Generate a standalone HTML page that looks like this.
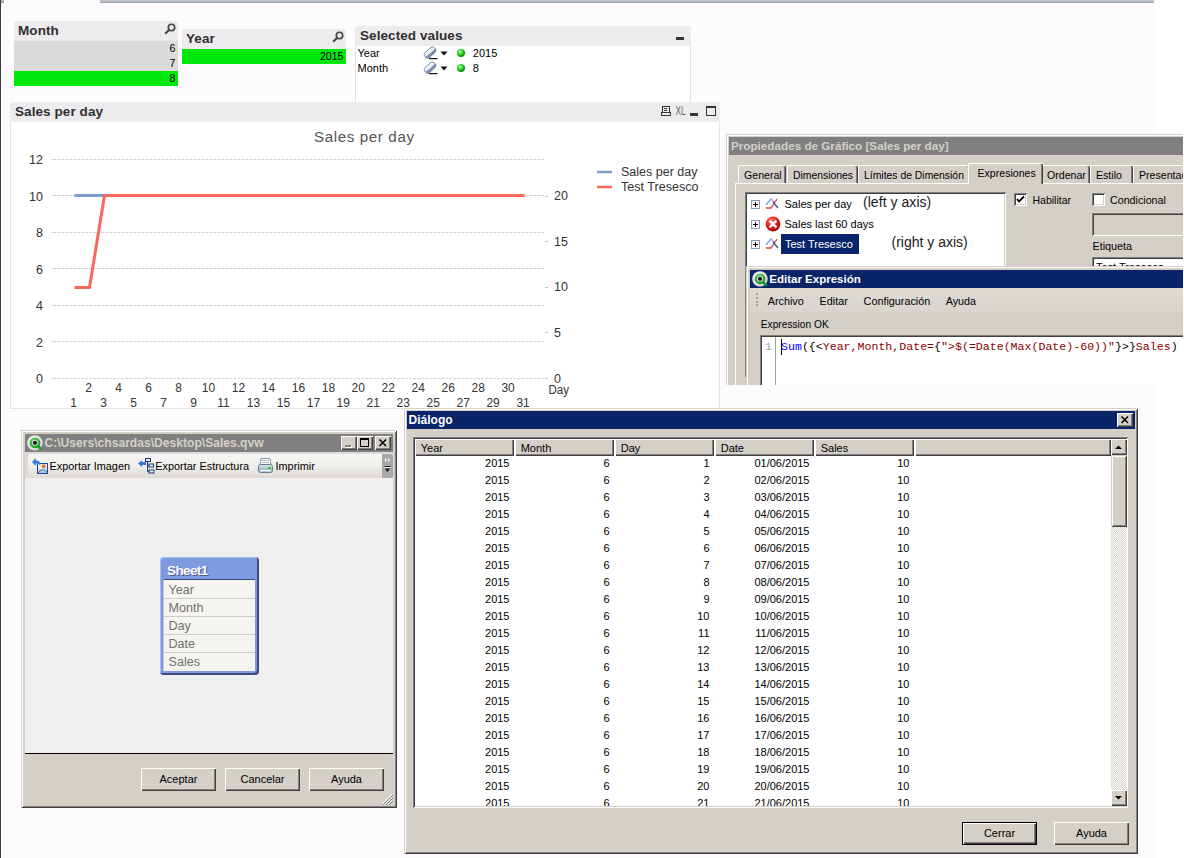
<!DOCTYPE html><html><head><meta charset="utf-8"><style>
html,body{margin:0;padding:0;}
body{width:1184px;height:858px;position:relative;overflow:hidden;background:#ffffff;font-family:"Liberation Sans",sans-serif;}
div{position:absolute;box-sizing:border-box;}
.t{white-space:pre;line-height:1;}
svg{position:absolute;}
</style></head><body><div style="left:0px;top:0px;width:1154px;height:858px;background:#fefbfe;"></div>
<div style="left:0px;top:0px;width:1px;height:858px;background:#3c3c3c;"></div>
<div style="left:1px;top:0px;width:3px;height:3px;background:linear-gradient(#c0c4cc,#8c9098);"></div>
<div style="left:100px;top:0px;width:1054px;height:3px;background:linear-gradient(#c4c8d0,#b4b8c0 60%,#8a8e96);"></div>
<div style="left:13.5px;top:21px;width:164.5px;height:20px;background:#eeebee;border-radius:2px 2px 0 0;"></div>
<div class="t" style="left:18px;top:24.00px;font-size:13.5px;font-weight:bold;color:#303030;letter-spacing:0.08px;">Month</div>
<svg style="left:164px;top:23px" width="12" height="12" viewBox="0 0 12 12"><circle cx="7.5" cy="4.5" r="3.2" fill="none" stroke="#444" stroke-width="1.6"/><line x1="5.2" y1="6.8" x2="1.2" y2="10.8" stroke="#444" stroke-width="2"/></svg>
<div style="left:14px;top:41px;width:164px;height:30px;background:#dbdbdb;"></div>
<div style="left:14px;top:71px;width:164px;height:15px;background:#00e80c;"></div>
<div class="t" style="right:1008.7px;top:43.00px;font-size:10.6px;color:#000;">6</div>
<div class="t" style="right:1008.7px;top:58.00px;font-size:10.6px;color:#000;">7</div>
<div class="t" style="right:1008.7px;top:73.00px;font-size:10.6px;color:#000;">8</div>
<div style="left:181.5px;top:29px;width:164.5px;height:20px;background:#eeebee;border-radius:2px 2px 0 0;"></div>
<div class="t" style="left:186px;top:32.00px;font-size:13.5px;font-weight:bold;color:#303030;letter-spacing:0.08px;">Year</div>
<svg style="left:332px;top:31px" width="12" height="12" viewBox="0 0 12 12"><circle cx="7.5" cy="4.5" r="3.2" fill="none" stroke="#444" stroke-width="1.6"/><line x1="5.2" y1="6.8" x2="1.2" y2="10.8" stroke="#444" stroke-width="2"/></svg>
<div style="left:182px;top:49px;width:164px;height:15px;background:#00e80c;"></div>
<div class="t" style="right:840.5px;top:51.00px;font-size:10.6px;color:#000;">2015</div>
<div style="left:355px;top:26px;width:336px;height:20px;background:#eeebee;border-radius:2px 2px 0 0;"></div>
<div class="t" style="left:360px;top:29.00px;font-size:13.5px;font-weight:bold;color:#303030;letter-spacing:0.08px;">Selected values</div>
<div style="left:676px;top:37px;width:8px;height:3px;background:#333;"></div>
<div style="left:355px;top:46px;width:336px;height:56px;background:#ffffff;border-left:1px solid #e4e0e4;border-right:1px solid #e4e0e4;"></div>
<div class="t" style="left:357.5px;top:48.00px;font-size:11px;color:#000;">Year</div>
<svg style="left:422px;top:46px" width="17" height="14" viewBox="0 0 17 14"><defs><linearGradient id="er0" x1="0" y1="0" x2="0" y2="1"><stop offset="0" stop-color="#ffffff"/><stop offset="0.55" stop-color="#e4e8f0"/><stop offset="0.56" stop-color="#9aa6bc"/><stop offset="1" stop-color="#6a7a98"/></linearGradient></defs><g transform="rotate(-42 8 6.5)"><rect x="1.5" y="3.3" width="13" height="6.6" rx="3" fill="url(#er0)" stroke="#6f86b4" stroke-width="0.9"/></g><rect x="7" y="12" width="8.5" height="1.2" fill="#111"/></svg>
<svg style="left:440px;top:51px" width="8" height="5" viewBox="0 0 8 5"><path d="M0.5 0.5 H7.5 L4 4.5 Z" fill="#111"/></svg>
<svg style="left:456px;top:48px" width="10" height="10" viewBox="0 0 10 10"><defs><radialGradient id="gd0" cx="0.4" cy="0.35" r="0.6"><stop offset="0" stop-color="#b8ffb0"/><stop offset="0.6" stop-color="#22cc22"/><stop offset="1" stop-color="#118811"/></radialGradient></defs><circle cx="5" cy="5" r="4" fill="url(#gd0)"/></svg>
<div class="t" style="left:472.8px;top:48.00px;font-size:11px;color:#000;">2015</div>
<div class="t" style="left:357.5px;top:63.00px;font-size:11px;color:#000;">Month</div>
<svg style="left:422px;top:61px" width="17" height="14" viewBox="0 0 17 14"><defs><linearGradient id="er1" x1="0" y1="0" x2="0" y2="1"><stop offset="0" stop-color="#ffffff"/><stop offset="0.55" stop-color="#e4e8f0"/><stop offset="0.56" stop-color="#9aa6bc"/><stop offset="1" stop-color="#6a7a98"/></linearGradient></defs><g transform="rotate(-42 8 6.5)"><rect x="1.5" y="3.3" width="13" height="6.6" rx="3" fill="url(#er1)" stroke="#6f86b4" stroke-width="0.9"/></g><rect x="7" y="12" width="8.5" height="1.2" fill="#111"/></svg>
<svg style="left:440px;top:66px" width="8" height="5" viewBox="0 0 8 5"><path d="M0.5 0.5 H7.5 L4 4.5 Z" fill="#111"/></svg>
<svg style="left:456px;top:63px" width="10" height="10" viewBox="0 0 10 10"><defs><radialGradient id="gd1" cx="0.4" cy="0.35" r="0.6"><stop offset="0" stop-color="#b8ffb0"/><stop offset="0.6" stop-color="#22cc22"/><stop offset="1" stop-color="#118811"/></radialGradient></defs><circle cx="5" cy="5" r="4" fill="url(#gd1)"/></svg>
<div class="t" style="left:472.8px;top:63.00px;font-size:11px;color:#000;">8</div>
<div style="left:10px;top:102px;width:710px;height:20px;background:#eeebee;border-radius:2px 2px 0 0;"></div>
<div class="t" style="left:15px;top:105.00px;font-size:13.5px;font-weight:bold;color:#303030;letter-spacing:0.08px;">Sales per day</div>
<div style="left:10px;top:122px;width:710px;height:287px;background:#ffffff;border:1px solid #e6e2e6;border-top:none;"></div>
<svg style="left:655px;top:102px" width="65" height="20" viewBox="0 0 65 20"><rect x="7.5" y="4.5" width="7" height="6" fill="none" stroke="#333" stroke-width="1"/><rect x="9" y="6" width="3" height="1" fill="#333"/><rect x="9" y="8" width="3" height="1" fill="#333"/><rect x="6.5" y="10.5" width="9" height="3" fill="none" stroke="#333" stroke-width="1"/><text x="20.6" y="13.2" font-family="Liberation Sans" font-size="13.5" fill="#666" textLength="10" lengthAdjust="spacingAndGlyphs">XL</text><rect x="35" y="11" width="8" height="3" fill="#333"/><rect x="51.5" y="4.5" width="9" height="9" fill="none" stroke="#333" stroke-width="1"/><rect x="51" y="4" width="10" height="2" fill="#333"/></svg>
<svg style="left:0;top:0" width="730" height="410" font-family="Liberation Sans"><text x="364.3" y="141.5" text-anchor="middle" font-size="15.2" letter-spacing="0.6" fill="#555">Sales per day</text><line x1="52" y1="378.5" x2="56" y2="378.5" stroke="#d6d4d6" stroke-width="1"/><line x1="57" y1="378.5" x2="544" y2="378.5" stroke="#d6d4d6" stroke-width="1" stroke-dasharray="3 1"/><text x="43" y="383.0" text-anchor="end" font-size="12.5" fill="#333">0</text><line x1="52" y1="341.5" x2="56" y2="341.5" stroke="#d6d4d6" stroke-width="1"/><line x1="57" y1="341.5" x2="544" y2="341.5" stroke="#d6d4d6" stroke-width="1" stroke-dasharray="3 1"/><text x="43" y="346.5" text-anchor="end" font-size="12.5" fill="#333">2</text><line x1="52" y1="305.5" x2="56" y2="305.5" stroke="#d6d4d6" stroke-width="1"/><line x1="57" y1="305.5" x2="544" y2="305.5" stroke="#d6d4d6" stroke-width="1" stroke-dasharray="3 1"/><text x="43" y="310.0" text-anchor="end" font-size="12.5" fill="#333">4</text><line x1="52" y1="268.5" x2="56" y2="268.5" stroke="#d6d4d6" stroke-width="1"/><line x1="57" y1="268.5" x2="544" y2="268.5" stroke="#d6d4d6" stroke-width="1" stroke-dasharray="3 1"/><text x="43" y="273.5" text-anchor="end" font-size="12.5" fill="#333">6</text><line x1="52" y1="232.5" x2="56" y2="232.5" stroke="#d6d4d6" stroke-width="1"/><line x1="57" y1="232.5" x2="544" y2="232.5" stroke="#d6d4d6" stroke-width="1" stroke-dasharray="3 1"/><text x="43" y="237.0" text-anchor="end" font-size="12.5" fill="#333">8</text><line x1="52" y1="195.5" x2="56" y2="195.5" stroke="#d6d4d6" stroke-width="1"/><line x1="57" y1="195.5" x2="544" y2="195.5" stroke="#d6d4d6" stroke-width="1" stroke-dasharray="3 1"/><text x="43" y="200.5" text-anchor="end" font-size="12.5" fill="#333">10</text><line x1="52" y1="159.5" x2="56" y2="159.5" stroke="#d6d4d6" stroke-width="1"/><line x1="57" y1="159.5" x2="544" y2="159.5" stroke="#d6d4d6" stroke-width="1" stroke-dasharray="3 1"/><text x="43" y="164.0" text-anchor="end" font-size="12.5" fill="#333">12</text><line x1="545" y1="378.5" x2="548" y2="378.5" stroke="#c8c8c8" stroke-width="1"/><text x="554" y="382.5" font-size="12.5" fill="#333">0</text><line x1="545" y1="332.5" x2="548" y2="332.5" stroke="#c8c8c8" stroke-width="1"/><text x="554" y="336.9" font-size="12.5" fill="#333">5</text><line x1="545" y1="287.5" x2="548" y2="287.5" stroke="#c8c8c8" stroke-width="1"/><text x="554" y="291.2" font-size="12.5" fill="#333">10</text><line x1="545" y1="241.5" x2="548" y2="241.5" stroke="#c8c8c8" stroke-width="1"/><text x="554" y="245.6" font-size="12.5" fill="#333">15</text><line x1="545" y1="196.5" x2="548" y2="196.5" stroke="#c8c8c8" stroke-width="1"/><text x="554" y="200.0" font-size="12.5" fill="#333">20</text><text x="548.5" y="393.5" font-size="12.5" fill="#333" textLength="20.5" lengthAdjust="spacingAndGlyphs">Day</text><text x="73.7" y="407" text-anchor="middle" font-size="12" fill="#333">1</text><text x="88.7" y="392" text-anchor="middle" font-size="12" fill="#333">2</text><text x="103.7" y="407" text-anchor="middle" font-size="12" fill="#333">3</text><text x="118.6" y="392" text-anchor="middle" font-size="12" fill="#333">4</text><text x="133.6" y="407" text-anchor="middle" font-size="12" fill="#333">5</text><text x="148.6" y="392" text-anchor="middle" font-size="12" fill="#333">6</text><text x="163.6" y="407" text-anchor="middle" font-size="12" fill="#333">7</text><text x="178.6" y="392" text-anchor="middle" font-size="12" fill="#333">8</text><text x="193.5" y="407" text-anchor="middle" font-size="12" fill="#333">9</text><text x="208.5" y="392" text-anchor="middle" font-size="12" fill="#333">10</text><text x="223.5" y="407" text-anchor="middle" font-size="12" fill="#333">11</text><text x="238.5" y="392" text-anchor="middle" font-size="12" fill="#333">12</text><text x="253.5" y="407" text-anchor="middle" font-size="12" fill="#333">13</text><text x="268.4" y="392" text-anchor="middle" font-size="12" fill="#333">14</text><text x="283.4" y="407" text-anchor="middle" font-size="12" fill="#333">15</text><text x="298.4" y="392" text-anchor="middle" font-size="12" fill="#333">16</text><text x="313.4" y="407" text-anchor="middle" font-size="12" fill="#333">17</text><text x="328.4" y="392" text-anchor="middle" font-size="12" fill="#333">18</text><text x="343.3" y="407" text-anchor="middle" font-size="12" fill="#333">19</text><text x="358.3" y="392" text-anchor="middle" font-size="12" fill="#333">20</text><text x="373.3" y="407" text-anchor="middle" font-size="12" fill="#333">21</text><text x="388.3" y="392" text-anchor="middle" font-size="12" fill="#333">22</text><text x="403.3" y="407" text-anchor="middle" font-size="12" fill="#333">23</text><text x="418.2" y="392" text-anchor="middle" font-size="12" fill="#333">24</text><text x="433.2" y="407" text-anchor="middle" font-size="12" fill="#333">25</text><text x="448.2" y="392" text-anchor="middle" font-size="12" fill="#333">26</text><text x="463.2" y="407" text-anchor="middle" font-size="12" fill="#333">27</text><text x="478.2" y="392" text-anchor="middle" font-size="12" fill="#333">28</text><text x="493.1" y="407" text-anchor="middle" font-size="12" fill="#333">29</text><text x="508.1" y="392" text-anchor="middle" font-size="12" fill="#333">30</text><text x="523.1" y="407" text-anchor="middle" font-size="12" fill="#333">31</text><polyline points="74.5,195.5 104.5,195.5" fill="none" stroke="#7f9ccc" stroke-width="3"/><polyline points="74.5,287.5 89.5,287.5 104.5,195.5 524.5,195.5" fill="none" stroke="#f8685c" stroke-width="3" stroke-linejoin="round"/><line x1="597" y1="172" x2="612" y2="172" stroke="#7f9ccc" stroke-width="2.5"/><line x1="597" y1="187" x2="612" y2="187" stroke="#f8685c" stroke-width="2.5"/><text x="621" y="176" font-size="12.5" fill="#333">Sales per day</text><text x="621" y="191" font-size="12.5" fill="#333" textLength="77.5">Test Tresesco</text></svg>
<div style="left:726px;top:134px;width:458px;height:251px;background:#d4d0c8;box-shadow:inset 1px 1px #d4d0c8, inset 2px 2px #ffffff;"></div>
<div style="left:729px;top:137px;width:455px;height:18px;background:#808080;"></div>
<div class="t" style="left:731px;top:140.00px;font-size:11.7px;font-weight:bold;color:#d4d0c8;">Propiedades de Gráfico [Sales per day]</div>
<div style="left:735px;top:183px;width:449px;height:202px;background:#d4d0c8;border-top:1px solid #fff;border-left:1px solid #fff;"></div>
<div style="left:738px;top:165px;width:48px;height:18px;background:#d4d0c8;border-left:1px solid #fff;border-top:1px solid #fff;box-shadow:inset -1px 0 #404040, inset -2px 0 #808080;border-radius:2px 2px 0 0;"></div>
<div class="t" style="left:744px;top:170.00px;font-size:10.6px;color:#000;">General</div>
<div style="left:787px;top:165px;width:71px;height:18px;background:#d4d0c8;border-left:1px solid #fff;border-top:1px solid #fff;box-shadow:inset -1px 0 #404040, inset -2px 0 #808080;border-radius:2px 2px 0 0;"></div>
<div class="t" style="left:793px;top:171.00px;font-size:10.4px;color:#000;">Dimensiones</div>
<div style="left:858px;top:165px;width:112px;height:18px;background:#d4d0c8;border-left:1px solid #fff;border-top:1px solid #fff;box-shadow:inset -1px 0 #404040, inset -2px 0 #808080;border-radius:2px 2px 0 0;"></div>
<div class="t" style="left:864px;top:171.00px;font-size:10.4px;color:#000;">Límites de Dimensión</div>
<div style="left:1041px;top:165px;width:49px;height:18px;background:#d4d0c8;border-left:1px solid #fff;border-top:1px solid #fff;box-shadow:inset -1px 0 #404040, inset -2px 0 #808080;border-radius:2px 2px 0 0;"></div>
<div class="t" style="left:1047px;top:170.00px;font-size:10.6px;color:#000;">Ordenar</div>
<div style="left:1090px;top:165px;width:43px;height:18px;background:#d4d0c8;border-left:1px solid #fff;border-top:1px solid #fff;box-shadow:inset -1px 0 #404040, inset -2px 0 #808080;border-radius:2px 2px 0 0;"></div>
<div class="t" style="left:1096px;top:170.00px;font-size:10.6px;color:#000;">Estilo</div>
<div style="left:1133px;top:165px;width:67px;height:18px;background:#d4d0c8;border-left:1px solid #fff;border-top:1px solid #fff;box-shadow:inset -1px 0 #404040, inset -2px 0 #808080;border-radius:2px 2px 0 0;"></div>
<div class="t" style="left:1139px;top:170.00px;font-size:10.6px;color:#000;">Presentación</div>
<div style="left:968px;top:163px;width:75px;height:21px;background:#d4d0c8;border-left:1px solid #fff;border-top:1px solid #fff;box-shadow:inset -1px 0 #404040, inset -2px 0 #808080;border-radius:2px 2px 0 0;"></div>
<div class="t" style="left:977.5px;top:168.00px;font-size:10.6px;color:#000;">Expresiones</div>
<div style="left:745px;top:192px;width:261px;height:185px;background:#fff;box-shadow:inset 1px 1px #808080, inset -1px -1px #ffffff, inset 2px 2px #404040, inset -2px -2px #d4d0c8;"></div>
<svg style="left:751px;top:200px" width="9" height="9" viewBox="0 0 9 9"><rect x="0.5" y="0.5" width="8" height="8" fill="#fff" stroke="#8a9ab8"/><path d="M2 4.5 H7 M4.5 2 V7" stroke="#000" stroke-width="1"/></svg>
<svg style="left:765px;top:197px" width="15" height="13" viewBox="0 0 15 13"><path d="M1 8 L6 2 L9 5" fill="none" stroke="#7f9fe0" stroke-width="1.3"/><path d="M1 11 L6 11 L12 2" fill="none" stroke="#e04040" stroke-width="1.3"/><path d="M8 5 L13 11" fill="none" stroke="#3050a0" stroke-width="1.3"/></svg>
<div class="t" style="left:784.5px;top:199.00px;font-size:11px;color:#000;">Sales per day</div>
<svg style="left:751px;top:220px" width="9" height="9" viewBox="0 0 9 9"><rect x="0.5" y="0.5" width="8" height="8" fill="#fff" stroke="#8a9ab8"/><path d="M2 4.5 H7 M4.5 2 V7" stroke="#000" stroke-width="1"/></svg>
<svg style="left:765px;top:216px" width="16" height="16" viewBox="0 0 16 16"><defs><radialGradient id="rx" cx="0.4" cy="0.3" r="0.75"><stop offset="0" stop-color="#ff7a6a"/><stop offset="0.6" stop-color="#d81818"/><stop offset="1" stop-color="#901010"/></radialGradient></defs><circle cx="8" cy="8" r="7.4" fill="url(#rx)"/><path d="M4.6 4.6 L11.4 11.4 M11.4 4.6 L4.6 11.4" stroke="#fff" stroke-width="2.3"/></svg>
<div class="t" style="left:784.5px;top:219.00px;font-size:11px;color:#000;">Sales last 60 days</div>
<svg style="left:751px;top:240px" width="9" height="9" viewBox="0 0 9 9"><rect x="0.5" y="0.5" width="8" height="8" fill="#fff" stroke="#8a9ab8"/><path d="M2 4.5 H7 M4.5 2 V7" stroke="#000" stroke-width="1"/></svg>
<svg style="left:765px;top:237px" width="15" height="13" viewBox="0 0 15 13"><path d="M1 8 L6 2 L9 5" fill="none" stroke="#7f9fe0" stroke-width="1.3"/><path d="M1 11 L6 11 L12 2" fill="none" stroke="#e04040" stroke-width="1.3"/><path d="M8 5 L13 11" fill="none" stroke="#3050a0" stroke-width="1.3"/></svg>
<div style="left:781px;top:234px;width:78px;height:20px;background:#0a246a;"></div>
<div class="t" style="left:785px;top:239.00px;font-size:11px;color:#fff;">Test Tresesco</div>
<div class="t" style="left:863px;top:195.00px;font-size:14px;color:#1a1a1a;letter-spacing:0.05px;">(left y axis)</div>
<div class="t" style="left:891.5px;top:235.00px;font-size:14px;color:#1a1a1a;">(right y axis)</div>
<div style="left:1014px;top:193px;width:13px;height:13px;background:#fff;box-shadow:inset 1px 1px #808080, inset -1px -1px #ffffff, inset 2px 2px #404040, inset -2px -2px #d4d0c8;"></div>
<svg style="left:1014px;top:193px" width="13" height="13" viewBox="0 0 13 13"><path d="M3 6 L5 8.5 L10 3.5" fill="none" stroke="#000" stroke-width="1.8"/></svg>
<div class="t" style="left:1032.5px;top:195.00px;font-size:10.5px;color:#000;">Habilitar</div>
<div style="left:1092px;top:193px;width:13px;height:13px;background:#fff;box-shadow:inset 1px 1px #808080, inset -1px -1px #ffffff, inset 2px 2px #404040, inset -2px -2px #d4d0c8;"></div>
<div class="t" style="left:1110px;top:195.00px;font-size:10.7px;color:#000;">Condicional</div>
<div style="left:1092px;top:213px;width:100px;height:23px;background:#d4d0c8;box-shadow:inset 1px 1px #808080, inset -1px -1px #ffffff, inset 2px 2px #404040, inset -2px -2px #d4d0c8;"></div>
<div class="t" style="left:1092.5px;top:241.00px;font-size:10.8px;color:#000;">Etiqueta</div>
<div style="left:1092px;top:257px;width:100px;height:22px;background:#fff;box-shadow:inset 1px 1px #808080, inset -1px -1px #ffffff, inset 2px 2px #404040, inset -2px -2px #d4d0c8;"></div>
<div class="t" style="left:1096px;top:262.00px;font-size:11px;color:#000;">Test Tresesco</div>
<div style="left:746px;top:266px;width:438px;height:119px;background:#d4d0c8;box-shadow:inset 1px 1px #d4d0c8, inset 2px 2px #ffffff;"></div>
<div style="left:750px;top:270px;width:434px;height:18px;background:#0a246a;"></div>
<svg style="left:752px;top:271px" width="16" height="16" viewBox="0 0 16 16"><defs><radialGradient id="lg" cx="0.4" cy="0.35" r="0.75"><stop offset="0" stop-color="#ffffff"/><stop offset="0.7" stop-color="#e0e0e0"/><stop offset="1" stop-color="#9a9a9a"/></radialGradient><radialGradient id="lgg" cx="0.4" cy="0.3" r="0.8"><stop offset="0" stop-color="#60d860"/><stop offset="1" stop-color="#108a18"/></radialGradient></defs><circle cx="8" cy="8" r="7.8" fill="url(#lg)"/><path d="M10.5 10.5 L13.6 13.6" stroke="#18a020" stroke-width="2.6" stroke-linecap="round"/><circle cx="8" cy="7.8" r="5.4" fill="url(#lgg)"/><circle cx="8" cy="7.8" r="3" fill="#dcdcdc"/><circle cx="8" cy="7.8" r="2.1" fill="#1e1e1e"/></svg>
<div class="t" style="left:769.3px;top:274.00px;font-size:11.5px;font-weight:bold;color:#fff;">Editar Expresión</div>
<div style="left:750px;top:288px;width:434px;height:24px;background:linear-gradient(#dedad4,#d8d4ce);"></div>
<svg style="left:756px;top:293px" width="3" height="13" viewBox="0 0 3 13"><rect x="0" y="0" width="2" height="2" fill="#a0a0a0"/><rect x="0" y="4" width="2" height="2" fill="#a0a0a0"/><rect x="0" y="8" width="2" height="2" fill="#a0a0a0"/><rect x="0" y="11" width="2" height="2" fill="#a0a0a0"/></svg>
<div class="t" style="left:767.7px;top:296.00px;font-size:10.8px;color:#000;">Archivo</div>
<div class="t" style="left:819.6px;top:296.00px;font-size:10.8px;color:#000;">Editar</div>
<div class="t" style="left:863.6px;top:296.00px;font-size:10.8px;color:#000;">Configuración</div>
<div class="t" style="left:945.7px;top:296.00px;font-size:10.8px;color:#000;">Ayuda</div>
<div class="t" style="left:760.8px;top:320.00px;font-size:10.2px;color:#000;">Expression OK</div>
<div style="left:760px;top:335px;width:424px;height:50px;background:#fff;box-shadow:inset 1px 1px #808080, inset 2px 2px #404040;"></div>
<div style="left:775px;top:337px;width:1px;height:48px;background:#a0a0a0;"></div>
<div class="t" style="left:765px;top:341px;font-family:'Liberation Mono',monospace;font-size:11.6px;color:#a0a0a0;">1</div>
<div style="left:781px;top:339px;width:1px;height:16px;background:#000;"></div>
<div class="t" style="left:781px;top:341px;font-family:'Liberation Mono',monospace;font-size:11.6px;color:#000;"><span style="color:#0000ff">Sum</span>({&lt;<span style="color:#8b0000">Year,Month,Date=</span>{<span style="color:#8b0000">"&gt;$(=Date(Max(Date)-60))"</span>}&gt;}<span style="color:#8b0000">Sales</span>)</div>
<div style="left:1183px;top:130px;width:1px;height:256px;background:#ffffff;"></div>
<div style="left:21px;top:430px;width:376px;height:378px;background:#d4d0c8;box-shadow:inset 1px 1px #d4d0c8, inset -1px -1px #404040, inset 2px 2px #ffffff, inset -2px -2px #808080;"></div>
<div style="left:25px;top:434px;width:368px;height:18px;background:#808080;"></div>
<svg style="left:27px;top:435px" width="16" height="16" viewBox="0 0 16 16"><defs><radialGradient id="lg" cx="0.4" cy="0.35" r="0.75"><stop offset="0" stop-color="#ffffff"/><stop offset="0.7" stop-color="#e0e0e0"/><stop offset="1" stop-color="#9a9a9a"/></radialGradient><radialGradient id="lgg" cx="0.4" cy="0.3" r="0.8"><stop offset="0" stop-color="#60d860"/><stop offset="1" stop-color="#108a18"/></radialGradient></defs><circle cx="8" cy="8" r="7.8" fill="url(#lg)"/><path d="M10.5 10.5 L13.6 13.6" stroke="#18a020" stroke-width="2.6" stroke-linecap="round"/><circle cx="8" cy="7.8" r="5.4" fill="url(#lgg)"/><circle cx="8" cy="7.8" r="3" fill="#dcdcdc"/><circle cx="8" cy="7.8" r="2.1" fill="#1e1e1e"/></svg>
<div class="t" style="left:44.5px;top:437.00px;font-size:12.1px;font-weight:bold;color:#d4d0c8;">C:\Users\chsardas\Desktop\Sales.qvw</div>
<div style="left:341px;top:436px;width:16px;height:14px;background:#d4d0c8;box-shadow:inset 1px 1px #ffffff, inset -1px -1px #404040, inset -2px -2px #808080;"></div>
<div style="left:345px;top:445px;width:6px;height:2px;background:#808080;box-shadow:1px 1px #fff;"></div>
<div style="left:357px;top:436px;width:16px;height:14px;background:#d4d0c8;box-shadow:inset 1px 1px #ffffff, inset -1px -1px #404040, inset -2px -2px #808080;"></div>
<div style="left:360px;top:438px;width:9px;height:9px;border:1px solid #000;border-top-width:2px;"></div>
<div style="left:375px;top:436px;width:16px;height:14px;background:#d4d0c8;box-shadow:inset 1px 1px #ffffff, inset -1px -1px #404040, inset -2px -2px #808080;"></div>
<svg style="left:375px;top:436px" width="16" height="14" viewBox="0 0 16 14"><path d="M4.5 3.5 L11 10 M11 3.5 L4.5 10" stroke="#000" stroke-width="1.6"/></svg>
<div style="left:25px;top:452px;width:368px;height:27px;background:#dedad6;"></div>
<div style="left:28px;top:454px;width:365px;height:25px;background:linear-gradient(#f8f6f4,#f0eeeb 50%,#dcd8d2);border-radius:3px 0 0 3px;"></div>
<div style="left:382px;top:454px;width:11px;height:24px;background:#a8a8a8;border-radius:0 2px 2px 0;"></div>
<svg style="left:382px;top:454px" width="11" height="24" viewBox="0 0 11 24"><path d="M3 4 L5 6 L3 8 Z M6 4 L8 6 L6 8 Z" fill="#fff"/><rect x="2.5" y="13" width="6" height="1.2" fill="#fff"/><path d="M2.5 15 H8.5 L5.5 19 Z" fill="#fff"/><rect x="2.5" y="12" width="6" height="1" fill="#222"/><path d="M2.5 14.5 H8.5 L5.5 18.5 Z" fill="#222"/></svg>
<svg style="left:32px;top:456px" width="18" height="20" viewBox="0 0 18 20"><defs><linearGradient id="ei" x1="0" y1="0" x2="0" y2="1"><stop offset="0" stop-color="#ffffff"/><stop offset="1" stop-color="#a8c0e8"/></linearGradient></defs><rect x="5.5" y="7.5" width="10" height="10" fill="url(#ei)" stroke="#1a48a8"/><path d="M6 17 Q10 11 15 16" fill="none" stroke="#5a6a80" stroke-width="1"/><circle cx="11.8" cy="10.2" r="1.9" fill="#f07020"/><path d="M0 6 L3.8 2 L3.8 4.6 Q7.5 4.6 9 8 L7.8 9 Q6.5 7.2 3.8 7.4 L3.8 10 Z" fill="#3a78e8"/></svg>
<div class="t" style="left:49.5px;top:461.00px;font-size:10.9px;color:#000;">Exportar Imagen</div>
<svg style="left:137px;top:456px" width="18" height="20" viewBox="0 0 18 20"><path d="M1 7.5 L5 4 L5 6 L9 6 L9 9 L5 9 L5 11 Z" fill="#3a78e0"/><path d="M10.5 5.5 V15.5 H12 M10.5 9.5 H12" fill="none" stroke="#203a70" stroke-width="1"/><rect x="8.5" y="2.5" width="5" height="3" fill="#e8eef8" stroke="#1a3470"/><rect x="12" y="8" width="4.5" height="3" fill="#e8eef8" stroke="#1a3470"/><rect x="12" y="14" width="5" height="3" fill="#e8eef8" stroke="#1a3470"/></svg>
<div class="t" style="left:155.3px;top:461.00px;font-size:10.9px;color:#000;">Exportar Estructura</div>
<svg style="left:257px;top:456px" width="18" height="20" viewBox="0 0 18 20"><defs><linearGradient id="pr" x1="0" y1="0" x2="0" y2="1"><stop offset="0" stop-color="#dce6ee"/><stop offset="1" stop-color="#8aa0b4"/></linearGradient></defs><path d="M4 2.5 H13 L14 9 H3 Z" fill="#f6f8fa" stroke="#8898a8" stroke-width="1"/><path d="M5 4.5 H12 M5 6.5 H12" stroke="#a8b4c0" stroke-width="0.8"/><rect x="1.5" y="8.5" width="14" height="8" rx="2" fill="url(#pr)" stroke="#6a7a8a"/><rect x="3" y="14" width="11" height="1.5" fill="#eef2f6"/><rect x="11" y="11" width="3" height="2" fill="#30d030"/></svg>
<div class="t" style="left:275.5px;top:461.00px;font-size:10.9px;color:#000;">Imprimir</div>
<div style="left:25px;top:478px;width:368px;height:275px;background:#efefef;"></div>
<div style="left:25px;top:753px;width:368px;height:1px;background:#000;"></div>
<div style="left:160px;top:557px;width:99px;height:118px;background:#7e9be0;border-radius:4px;box-shadow:inset -2px -2px #3c4c80, inset 1px 1px #a8bcf0;"></div>
<div class="t" style="left:167px;top:564.00px;font-size:13.5px;font-weight:bold;color:#fff;text-shadow:1px 1px 0 #4a5a90;letter-spacing:-0.6px;">Sheet1</div>
<div style="left:163px;top:579px;width:92px;height:92px;background:#f6f4ee;border-top:1px solid #3a4a78;border-left:1px solid #c8c8d0;"></div>
<div class="t" style="left:168.5px;top:584.00px;font-size:12.6px;color:#727272;">Year</div>
<div style="left:164px;top:597.5px;width:91px;height:1px;background:#cfcdc8;"></div>
<div class="t" style="left:168.5px;top:602.00px;font-size:12.6px;color:#727272;">Month</div>
<div style="left:164px;top:615.5px;width:91px;height:1px;background:#cfcdc8;"></div>
<div class="t" style="left:168.5px;top:620.00px;font-size:12.6px;color:#727272;">Day</div>
<div style="left:164px;top:633.5px;width:91px;height:1px;background:#cfcdc8;"></div>
<div class="t" style="left:168.5px;top:638.00px;font-size:12.6px;color:#727272;">Date</div>
<div style="left:164px;top:651.5px;width:91px;height:1px;background:#cfcdc8;"></div>
<div class="t" style="left:168.5px;top:656.00px;font-size:12.6px;color:#727272;">Sales</div>
<div style="left:141px;top:768px;width:75px;height:23px;background:#d4d0c8;box-shadow:inset 1px 1px #ffffff, inset -1px -1px #404040, inset -2px -2px #808080;"></div>
<div class="t" style="left:141px;width:75px;text-align:center;top:774.19px;font-size:11px;color:#000;">Aceptar</div>
<div style="left:225px;top:768px;width:75px;height:23px;background:#d4d0c8;box-shadow:inset 1px 1px #ffffff, inset -1px -1px #404040, inset -2px -2px #808080;"></div>
<div class="t" style="left:225px;width:75px;text-align:center;top:774.19px;font-size:11px;color:#000;">Cancelar</div>
<div style="left:309px;top:768px;width:75px;height:23px;background:#d4d0c8;box-shadow:inset 1px 1px #ffffff, inset -1px -1px #404040, inset -2px -2px #808080;"></div>
<div class="t" style="left:309px;width:75px;text-align:center;top:774.19px;font-size:11px;color:#000;">Ayuda</div>
<svg style="left:381px;top:793px" width="12" height="12" viewBox="0 0 12 12"><path d="M11 1 L1 11 M11 4 L4 11 M11 7 L7 11" stroke="#fff" stroke-width="1"/><path d="M12 2 L2 12 M12 5 L5 12 M12 8 L8 12" stroke="#808080" stroke-width="1"/></svg>
<div style="left:404px;top:408px;width:734px;height:446px;background:#d4d0c8;box-shadow:inset 1px 1px #d4d0c8, inset -1px -1px #404040, inset 2px 2px #ffffff, inset -2px -2px #808080;"></div>
<div style="left:407px;top:411px;width:728px;height:18px;background:#0a246a;"></div>
<div class="t" style="left:408.6px;top:414.00px;font-size:12px;font-weight:bold;color:#fff;">Diálogo</div>
<div style="left:1117px;top:413px;width:16px;height:14px;background:#d4d0c8;box-shadow:inset 1px 1px #ffffff, inset -1px -1px #404040, inset -2px -2px #808080;"></div>
<svg style="left:1117px;top:413px" width="16" height="14" viewBox="0 0 16 14"><path d="M4.5 3.5 L11 10 M11 3.5 L4.5 10" stroke="#000" stroke-width="1.6"/></svg>
<div style="left:413px;top:437px;width:715px;height:371px;background:#fff;box-shadow:inset 1px 1px #808080, inset -1px -1px #ffffff, inset 2px 2px #404040, inset -2px -2px #d4d0c8;"></div>
<div style="left:415px;top:439px;width:99px;height:17px;background:#d4d0c8;box-shadow:inset 1px 1px #ffffff, inset -1px -1px #404040, inset -2px -2px #808080;"></div>
<div class="t" style="left:420.7px;top:443.00px;font-size:11px;color:#000;">Year</div>
<div style="left:515px;top:439px;width:99px;height:17px;background:#d4d0c8;box-shadow:inset 1px 1px #ffffff, inset -1px -1px #404040, inset -2px -2px #808080;"></div>
<div class="t" style="left:520.7px;top:443.00px;font-size:11px;color:#000;">Month</div>
<div style="left:615px;top:439px;width:99px;height:17px;background:#d4d0c8;box-shadow:inset 1px 1px #ffffff, inset -1px -1px #404040, inset -2px -2px #808080;"></div>
<div class="t" style="left:620.7px;top:443.00px;font-size:11px;color:#000;">Day</div>
<div style="left:715px;top:439px;width:99px;height:17px;background:#d4d0c8;box-shadow:inset 1px 1px #ffffff, inset -1px -1px #404040, inset -2px -2px #808080;"></div>
<div class="t" style="left:720.7px;top:443.00px;font-size:11px;color:#000;">Date</div>
<div style="left:815px;top:439px;width:99px;height:17px;background:#d4d0c8;box-shadow:inset 1px 1px #ffffff, inset -1px -1px #404040, inset -2px -2px #808080;"></div>
<div class="t" style="left:820.7px;top:443.00px;font-size:11px;color:#000;">Sales</div>
<div style="left:915px;top:439px;width:196px;height:17px;background:#d4d0c8;box-shadow:inset 1px 1px #ffffff, inset -1px -1px #404040, inset -2px -2px #808080;"></div>
<div style="left:415px;top:456px;width:696px;height:350px;overflow:hidden;"><div class="t" style="right:601.5px;top:2px;font-size:11px;color:#000;">2015</div><div class="t" style="right:501.5px;top:2px;font-size:11px;color:#000;">6</div><div class="t" style="right:401.5px;top:2px;font-size:11px;color:#000;">1</div><div class="t" style="right:301.5px;top:2px;font-size:11px;color:#000;">01/06/2015</div><div class="t" style="right:201.5px;top:2px;font-size:11px;color:#000;">10</div><div class="t" style="right:601.5px;top:19px;font-size:11px;color:#000;">2015</div><div class="t" style="right:501.5px;top:19px;font-size:11px;color:#000;">6</div><div class="t" style="right:401.5px;top:19px;font-size:11px;color:#000;">2</div><div class="t" style="right:301.5px;top:19px;font-size:11px;color:#000;">02/06/2015</div><div class="t" style="right:201.5px;top:19px;font-size:11px;color:#000;">10</div><div class="t" style="right:601.5px;top:36px;font-size:11px;color:#000;">2015</div><div class="t" style="right:501.5px;top:36px;font-size:11px;color:#000;">6</div><div class="t" style="right:401.5px;top:36px;font-size:11px;color:#000;">3</div><div class="t" style="right:301.5px;top:36px;font-size:11px;color:#000;">03/06/2015</div><div class="t" style="right:201.5px;top:36px;font-size:11px;color:#000;">10</div><div class="t" style="right:601.5px;top:53px;font-size:11px;color:#000;">2015</div><div class="t" style="right:501.5px;top:53px;font-size:11px;color:#000;">6</div><div class="t" style="right:401.5px;top:53px;font-size:11px;color:#000;">4</div><div class="t" style="right:301.5px;top:53px;font-size:11px;color:#000;">04/06/2015</div><div class="t" style="right:201.5px;top:53px;font-size:11px;color:#000;">10</div><div class="t" style="right:601.5px;top:70px;font-size:11px;color:#000;">2015</div><div class="t" style="right:501.5px;top:70px;font-size:11px;color:#000;">6</div><div class="t" style="right:401.5px;top:70px;font-size:11px;color:#000;">5</div><div class="t" style="right:301.5px;top:70px;font-size:11px;color:#000;">05/06/2015</div><div class="t" style="right:201.5px;top:70px;font-size:11px;color:#000;">10</div><div class="t" style="right:601.5px;top:87px;font-size:11px;color:#000;">2015</div><div class="t" style="right:501.5px;top:87px;font-size:11px;color:#000;">6</div><div class="t" style="right:401.5px;top:87px;font-size:11px;color:#000;">6</div><div class="t" style="right:301.5px;top:87px;font-size:11px;color:#000;">06/06/2015</div><div class="t" style="right:201.5px;top:87px;font-size:11px;color:#000;">10</div><div class="t" style="right:601.5px;top:104px;font-size:11px;color:#000;">2015</div><div class="t" style="right:501.5px;top:104px;font-size:11px;color:#000;">6</div><div class="t" style="right:401.5px;top:104px;font-size:11px;color:#000;">7</div><div class="t" style="right:301.5px;top:104px;font-size:11px;color:#000;">07/06/2015</div><div class="t" style="right:201.5px;top:104px;font-size:11px;color:#000;">10</div><div class="t" style="right:601.5px;top:121px;font-size:11px;color:#000;">2015</div><div class="t" style="right:501.5px;top:121px;font-size:11px;color:#000;">6</div><div class="t" style="right:401.5px;top:121px;font-size:11px;color:#000;">8</div><div class="t" style="right:301.5px;top:121px;font-size:11px;color:#000;">08/06/2015</div><div class="t" style="right:201.5px;top:121px;font-size:11px;color:#000;">10</div><div class="t" style="right:601.5px;top:138px;font-size:11px;color:#000;">2015</div><div class="t" style="right:501.5px;top:138px;font-size:11px;color:#000;">6</div><div class="t" style="right:401.5px;top:138px;font-size:11px;color:#000;">9</div><div class="t" style="right:301.5px;top:138px;font-size:11px;color:#000;">09/06/2015</div><div class="t" style="right:201.5px;top:138px;font-size:11px;color:#000;">10</div><div class="t" style="right:601.5px;top:155px;font-size:11px;color:#000;">2015</div><div class="t" style="right:501.5px;top:155px;font-size:11px;color:#000;">6</div><div class="t" style="right:401.5px;top:155px;font-size:11px;color:#000;">10</div><div class="t" style="right:301.5px;top:155px;font-size:11px;color:#000;">10/06/2015</div><div class="t" style="right:201.5px;top:155px;font-size:11px;color:#000;">10</div><div class="t" style="right:601.5px;top:172px;font-size:11px;color:#000;">2015</div><div class="t" style="right:501.5px;top:172px;font-size:11px;color:#000;">6</div><div class="t" style="right:401.5px;top:172px;font-size:11px;color:#000;">11</div><div class="t" style="right:301.5px;top:172px;font-size:11px;color:#000;">11/06/2015</div><div class="t" style="right:201.5px;top:172px;font-size:11px;color:#000;">10</div><div class="t" style="right:601.5px;top:189px;font-size:11px;color:#000;">2015</div><div class="t" style="right:501.5px;top:189px;font-size:11px;color:#000;">6</div><div class="t" style="right:401.5px;top:189px;font-size:11px;color:#000;">12</div><div class="t" style="right:301.5px;top:189px;font-size:11px;color:#000;">12/06/2015</div><div class="t" style="right:201.5px;top:189px;font-size:11px;color:#000;">10</div><div class="t" style="right:601.5px;top:206px;font-size:11px;color:#000;">2015</div><div class="t" style="right:501.5px;top:206px;font-size:11px;color:#000;">6</div><div class="t" style="right:401.5px;top:206px;font-size:11px;color:#000;">13</div><div class="t" style="right:301.5px;top:206px;font-size:11px;color:#000;">13/06/2015</div><div class="t" style="right:201.5px;top:206px;font-size:11px;color:#000;">10</div><div class="t" style="right:601.5px;top:223px;font-size:11px;color:#000;">2015</div><div class="t" style="right:501.5px;top:223px;font-size:11px;color:#000;">6</div><div class="t" style="right:401.5px;top:223px;font-size:11px;color:#000;">14</div><div class="t" style="right:301.5px;top:223px;font-size:11px;color:#000;">14/06/2015</div><div class="t" style="right:201.5px;top:223px;font-size:11px;color:#000;">10</div><div class="t" style="right:601.5px;top:240px;font-size:11px;color:#000;">2015</div><div class="t" style="right:501.5px;top:240px;font-size:11px;color:#000;">6</div><div class="t" style="right:401.5px;top:240px;font-size:11px;color:#000;">15</div><div class="t" style="right:301.5px;top:240px;font-size:11px;color:#000;">15/06/2015</div><div class="t" style="right:201.5px;top:240px;font-size:11px;color:#000;">10</div><div class="t" style="right:601.5px;top:257px;font-size:11px;color:#000;">2015</div><div class="t" style="right:501.5px;top:257px;font-size:11px;color:#000;">6</div><div class="t" style="right:401.5px;top:257px;font-size:11px;color:#000;">16</div><div class="t" style="right:301.5px;top:257px;font-size:11px;color:#000;">16/06/2015</div><div class="t" style="right:201.5px;top:257px;font-size:11px;color:#000;">10</div><div class="t" style="right:601.5px;top:274px;font-size:11px;color:#000;">2015</div><div class="t" style="right:501.5px;top:274px;font-size:11px;color:#000;">6</div><div class="t" style="right:401.5px;top:274px;font-size:11px;color:#000;">17</div><div class="t" style="right:301.5px;top:274px;font-size:11px;color:#000;">17/06/2015</div><div class="t" style="right:201.5px;top:274px;font-size:11px;color:#000;">10</div><div class="t" style="right:601.5px;top:291px;font-size:11px;color:#000;">2015</div><div class="t" style="right:501.5px;top:291px;font-size:11px;color:#000;">6</div><div class="t" style="right:401.5px;top:291px;font-size:11px;color:#000;">18</div><div class="t" style="right:301.5px;top:291px;font-size:11px;color:#000;">18/06/2015</div><div class="t" style="right:201.5px;top:291px;font-size:11px;color:#000;">10</div><div class="t" style="right:601.5px;top:308px;font-size:11px;color:#000;">2015</div><div class="t" style="right:501.5px;top:308px;font-size:11px;color:#000;">6</div><div class="t" style="right:401.5px;top:308px;font-size:11px;color:#000;">19</div><div class="t" style="right:301.5px;top:308px;font-size:11px;color:#000;">19/06/2015</div><div class="t" style="right:201.5px;top:308px;font-size:11px;color:#000;">10</div><div class="t" style="right:601.5px;top:325px;font-size:11px;color:#000;">2015</div><div class="t" style="right:501.5px;top:325px;font-size:11px;color:#000;">6</div><div class="t" style="right:401.5px;top:325px;font-size:11px;color:#000;">20</div><div class="t" style="right:301.5px;top:325px;font-size:11px;color:#000;">20/06/2015</div><div class="t" style="right:201.5px;top:325px;font-size:11px;color:#000;">10</div><div class="t" style="right:601.5px;top:342px;font-size:11px;color:#000;">2015</div><div class="t" style="right:501.5px;top:342px;font-size:11px;color:#000;">6</div><div class="t" style="right:401.5px;top:342px;font-size:11px;color:#000;">21</div><div class="t" style="right:301.5px;top:342px;font-size:11px;color:#000;">21/06/2015</div><div class="t" style="right:201.5px;top:342px;font-size:11px;color:#000;">10</div></div>
<div style="left:1111px;top:455px;width:16px;height:351px;background-color:#e8e6e2;background-image:repeating-conic-gradient(#d4d0c8 0 25%, #ffffff 0 50%);background-size:2px 2px;"></div>
<div style="left:1111px;top:439px;width:16px;height:16px;background:#d4d0c8;box-shadow:inset 1px 1px #ffffff, inset -1px -1px #404040, inset -2px -2px #808080;"></div>
<svg style="left:1111px;top:439px" width="16" height="16" viewBox="0 0 16 16"><path d="M4 10 H11 L7.5 6.5 Z" fill="#000"/></svg>
<div style="left:1111px;top:455px;width:16px;height:72px;background:#d4d0c8;box-shadow:inset 1px 1px #d4d0c8, inset -1px -1px #404040, inset 2px 2px #ffffff, inset -2px -2px #808080;"></div>
<div style="left:1111px;top:790px;width:16px;height:16px;background:#d4d0c8;box-shadow:inset 1px 1px #ffffff, inset -1px -1px #404040, inset -2px -2px #808080;"></div>
<svg style="left:1111px;top:790px" width="16" height="16" viewBox="0 0 16 16"><path d="M4 6 H11 L7.5 9.5 Z" fill="#000"/></svg>
<div style="left:962px;top:822px;width:75px;height:23px;background:#d4d0c8;border:1px solid #000;box-shadow:inset 1px 1px #ffffff, inset -1px -1px #404040, inset -2px -2px #808080;"></div>
<div class="t" style="left:962px;width:75px;text-align:center;top:828.19px;font-size:11px;color:#000;">Cerrar</div>
<div style="left:1054px;top:822px;width:75px;height:23px;background:#d4d0c8;box-shadow:inset 1px 1px #ffffff, inset -1px -1px #404040, inset -2px -2px #808080;"></div>
<div class="t" style="left:1054px;width:75px;text-align:center;top:828.19px;font-size:11px;color:#000;">Ayuda</div></body></html>
